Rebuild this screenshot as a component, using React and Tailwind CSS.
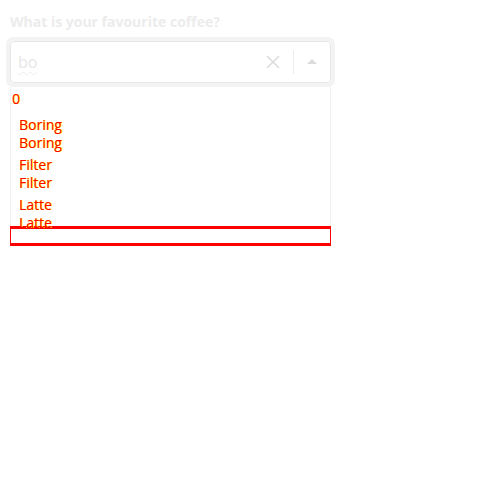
import React from "react";

const opt = "text-[14px] leading-[18px] text-[#ff0000] [text-shadow:1px_0_0_#ffff00]";

export default function App() {
  return (
    <div className="w-[500px] h-[500px] bg-white font-['Open_Sans',sans-serif]">
      <div className="pt-[12px] pl-[10px] w-[331px]">
        <div className="text-[14px] leading-[20px] font-bold text-[#ececec]">What is your favourite coffee?</div>
        <div className="mt-[5px] -mx-[4px] rounded-[7px] border-[4px] border-[#f3f3f3]">
          <div className="h-[42px] rounded-[4px] border border-[#e6e6e6] flex items-center bg-white">
            <div className="flex-1 pl-[7px] text-[16px] text-[#e6e6e6] underline decoration-wavy decoration-[#ececec] underline-offset-[3px] decoration-[1px]">bo</div>
            <div className="flex items-center h-full">
              <svg width="16" height="16" viewBox="0 0 16 16" className="mr-[12px]">
                <path d="M2 2 L14 14 M14 2 L2 14" stroke="#dcdcdc" strokeWidth="1.6" />
              </svg>
              <div className="w-px h-[24px] bg-[#eeeeee]" />
              <svg width="12" height="8" viewBox="0 0 12 8" className="mx-[12px]">
                <path d="M1 6 L6 1 L11 6 Z" fill="#dcdcdc" />
              </svg>
            </div>
          </div>
        </div>
        <div className="border-x border-[#f2f2f2] bg-white pb-[2px]">
          <div className={opt + " pl-[1px] pt-[3px]"}>0</div>
          <div className="pl-[8px] pt-[8px] flex flex-col">
            <div className={opt}>Boring</div>
            <div className={opt}>Boring</div>
            <div className={opt + " mt-[4px]"}>Filter</div>
            <div className={opt}>Filter</div>
            <div className={opt + " mt-[4px]"}>Latte</div>
            <div className={opt}>Latte</div>
          </div>
        </div>
        <div className="-mt-[8px] h-[20px] border-y-[3px] border-x border-[#ff0000]" />
      </div>
    </div>
  );
}
